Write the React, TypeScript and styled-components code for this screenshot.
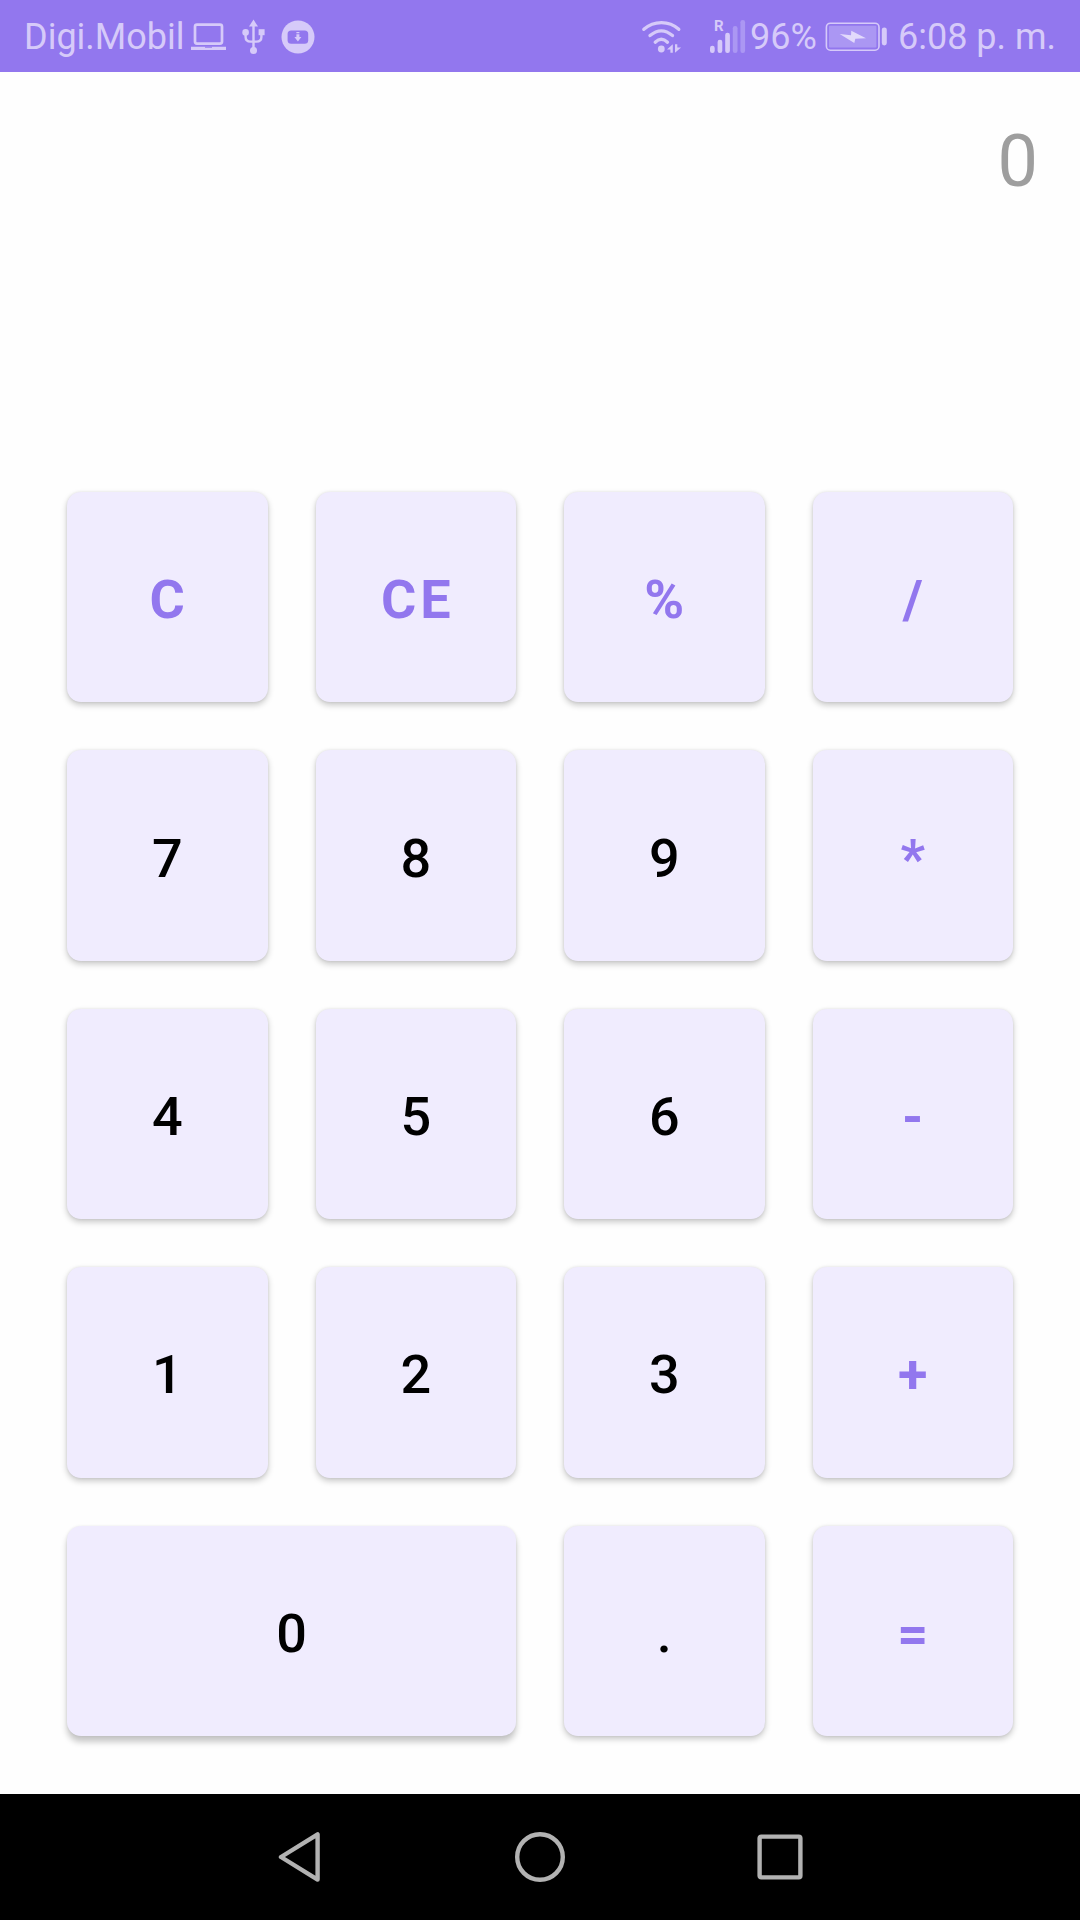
import React, { useState } from "react";
import styled, { createGlobalStyle } from "styled-components";

const purple = "#9277ee";
const statusInk = "#d6caf9";
const statusDim = "#ab97f3";

const GlobalStyle = createGlobalStyle`
  * { box-sizing: border-box; }
  body { margin: 0; background: #fefefe; font-family: Roboto, "Liberation Sans", sans-serif; }
`;

const Screen = styled.div`
  display: flex;
  flex-direction: column;
  min-height: 100vh;
`;

const StatusBar = styled.header`
  display: flex;
  align-items: center;
  justify-content: space-between;
  height: 72px;
  padding: 2px 24px 0;
  background: ${purple};
  color: ${statusInk};
  font-size: 36px;
  line-height: 44px;
  white-space: nowrap;
`;

const StatusGroup = styled.div<{ $gap: number }>`
  display: flex;
  align-items: center;
  gap: ${(p) => p.$gap}px;
`;

const StatusPair = styled.span<{ $gap: number }>`
  display: flex;
  align-items: center;
  gap: ${(p) => p.$gap}px;
`;

const Calculator = styled.main`
  flex: 1;
  display: flex;
  flex-direction: column;
`;

const Display = styled.output`
  display: block;
  height: 420px;
  padding: 48px 42px 0;
  color: #9e9e9e;
  font-size: 72px;
  line-height: 84px;
  text-align: right;
  overflow: hidden;
`;

const Keypad = styled.div`
  flex: 1;
  display: grid;
  grid-template-columns: repeat(4, 1fr);
  grid-auto-rows: 1fr;
  gap: 48px;
  padding: 0 67px 58px;
`;

const Key = styled.button<{ $accent?: boolean; $wide?: boolean }>`
  grid-column: span ${(p) => (p.$wide ? 2 : 1)};
  min-height: 96px;
  padding: 6px 0 0 4px;
  border: 0;
  border-radius: 14px;
  background: #f0ecfe;
  box-shadow: ${(p) => (p.$wide ? "0 6px 6px" : "0 3px 6px")} rgba(0, 0, 0, 0.22),
    0 0 3px rgba(0, 0, 0, 0.08);
  color: ${(p) => (p.$accent ? purple : "#000")};
  font-family: inherit;
  font-size: 54px;
  line-height: 64px;
  font-weight: ${(p) => (p.$accent ? 700 : 500)};
  letter-spacing: 4px;
  cursor: pointer;
`;

const NavBar = styled.nav`
  display: flex;
  height: 126px;
  padding: 0 180px;
  background: #000;
`;

const NavButton = styled.button`
  flex: 1;
  display: flex;
  align-items: center;
  justify-content: center;
  padding: 0;
  border: 0;
  background: none;
  color: #b2b2b2;
`;

const LaptopIcon = () => (
  <svg width="36" height="32" viewBox="0 0 36 32" fill="none" aria-hidden="true">
    <rect x="4" y="3.6" width="27" height="19" rx="2" stroke={statusInk} strokeWidth="2.7" />
    <path d="M0 25.7H35V29H0z" fill={statusInk} />
    <path d="M14 25.7h7v1h-7z" fill={purple} />
  </svg>
);

const UsbIcon = () => (
  <svg width="24" height="36" viewBox="0 0 24 36" fill="none" aria-hidden="true">
    <path d="M11.5 6V30M3.6 14v4q0 4.6 5 4.6h5.8q5 0 5-4.6v-4" stroke={statusInk} strokeWidth="2.4" />
    <path d="M11.5 0.6L16 7.6H7z" fill={statusInk} />
    <circle cx="3.6" cy="13.4" r="3.3" fill={statusInk} />
    <rect x="16.6" y="10.2" width="6" height="6" fill={statusInk} />
    <circle cx="11.5" cy="31.4" r="3.5" fill={statusInk} />
  </svg>
);

const DownloadIcon = () => (
  <svg width="34" height="34" viewBox="0 0 34 34" aria-hidden="true">
    <circle cx="17" cy="17" r="16.5" fill={statusInk} />
    <rect x="6.6" y="10.4" width="20.6" height="13.4" rx="3.6" fill={purple} />
    <path d="M15.4 12h3v1.2h-3zM15.4 14.2h3V17h2l-3.5 4.4L13.4 17h2z" fill={statusInk} />
  </svg>
);

const WifiIcon = () => (
  <svg width="42" height="36" viewBox="0 0 42 36" fill="none" aria-hidden="true">
    <g stroke={statusInk} strokeWidth="3.3" strokeLinecap="round">
      <path d="M2.8 10.3C13 1.3 28 1.3 37.8 10.3" />
      <path d="M9 16.6Q20.3 7.2 31.5 16.6" />
      <path d="M14.2 23.2Q20.3 17.2 26.5 23.2" />
    </g>
    <circle cx="20.3" cy="30" r="3.4" fill={statusInk} />
    <path d="M26 30.6L31.8 25.3V33.8H29.4V30.6zM34 25.3h2.3v3.2h3.8L34 33.8z" fill={statusInk} />
  </svg>
);

const SignalLetter = styled.text`
  fill: ${statusInk};
  font-size: 15px;
  line-height: 16px;
  font-weight: 700;
`;

const signalTops = [26.7, 20.7, 13.7, 7, 1];

const SignalIcon = () => (
  <svg width="37" height="48" viewBox="0 -6 37 48" role="img" aria-label="Roaming signal">
    {signalTops.map((top, i) => (
      <rect
        key={top}
        x={1 + i * 7.6}
        y={top}
        width="4.7"
        height={34 - top}
        rx="2.2"
        fill={i < 3 ? statusInk : statusDim}
      />
    ))}
    <SignalLetter x="5" y="12">R</SignalLetter>
  </svg>
);

const BatteryIcon = () => (
  <svg width="63" height="30" viewBox="0 0 63 30" fill="none" aria-hidden="true">
    <rect x="1.4" y="1.2" width="52.6" height="27" rx="4" stroke={statusInk} strokeWidth="1.6" />
    <rect x="4" y="3.8" width="47.4" height="21.6" rx="1" fill={statusDim} />
    <rect x="56.8" y="5.4" width="5" height="18" rx="2.4" fill={statusInk} />
    <path d="M14.7 12L26 13.2L26.3 8.7L41 16.3L30.3 16.8L29.3 21z" fill="#e2dafb" />
  </svg>
);

const BackIcon = () => (
  <svg width="44" height="52" viewBox="0 0 44 52" fill="none" aria-hidden="true">
    <path d="M3 26L39.6 3.4V48.6z" stroke="currentColor" strokeWidth="4.4" strokeLinejoin="round" />
  </svg>
);

const HomeIcon = () => (
  <svg width="50" height="50" viewBox="0 0 50 50" fill="none" aria-hidden="true">
    <circle cx="25" cy="25" r="22.8" stroke="currentColor" strokeWidth="4.4" />
  </svg>
);

const RecentsIcon = () => (
  <svg width="46" height="46" viewBox="0 0 46 46" fill="none" aria-hidden="true">
    <rect x="2.6" y="2.6" width="40.8" height="40.8" rx="1.6" stroke="currentColor" strokeWidth="4.4" />
  </svg>
);

const keys = [
  "C", "CE", "%", "/",
  "7", "8", "9", "*",
  "4", "5", "6", "-",
  "1", "2", "3", "+",
  "0", ".", "=",
];

const isDigit = (key: string) => /[0-9.]/.test(key);

const compute = (a: number, op: string, b: number) => {
  switch (op) {
    case "+": return a + b;
    case "-": return a - b;
    case "*": return a * b;
    case "/": return a / b;
    default: return b;
  }
};

export default function App() {
  const [entry, setEntry] = useState("0");
  const [stored, setStored] = useState(0);
  const [operator, setOperator] = useState("");
  const [fresh, setFresh] = useState(true);

  const press = (key: string) => {
    if (isDigit(key)) {
      if (key === "." && !fresh && entry.includes(".")) return;
      setEntry(fresh ? (key === "." ? "0." : key) : entry + key);
      setFresh(false);
    } else if (key === "C" || key === "CE") {
      setEntry("0");
      setFresh(true);
      if (key === "C") {
        setStored(0);
        setOperator("");
      }
    } else if (key === "%") {
      setEntry(String(Number(entry) / 100));
      setFresh(true);
    } else {
      const result = compute(stored, operator, Number(entry));
      setEntry(String(result));
      setStored(result);
      setOperator(key === "=" ? "" : key);
      setFresh(true);
    }
  };

  return (
    <Screen>
      <GlobalStyle />
      <StatusBar>
        <StatusGroup $gap={15}>
          <StatusPair $gap={6}>
            <span>Digi.Mobil</span>
            <LaptopIcon />
          </StatusPair>
          <UsbIcon />
          <DownloadIcon />
        </StatusGroup>
        <StatusGroup $gap={10}>
          <StatusPair $gap={8}>
            <StatusPair $gap={26}>
              <WifiIcon />
              <StatusPair $gap={4}>
                <SignalIcon />
                <span>96%</span>
              </StatusPair>
            </StatusPair>
            <BatteryIcon />
          </StatusPair>
          <span>6:08 p. m.</span>
        </StatusGroup>
      </StatusBar>
      <Calculator>
        <Display>{entry}</Display>
        <Keypad>
          {keys.map((key) => (
            <Key
              key={key}
              type="button"
              $accent={!isDigit(key)}
              $wide={key === "0"}
              onClick={() => press(key)}
            >
              {key}
            </Key>
          ))}
        </Keypad>
      </Calculator>
      <NavBar>
        <NavButton type="button" aria-label="Back"><BackIcon /></NavButton>
        <NavButton type="button" aria-label="Home"><HomeIcon /></NavButton>
        <NavButton type="button" aria-label="Recent apps"><RecentsIcon /></NavButton>
      </NavBar>
    </Screen>
  );
}
